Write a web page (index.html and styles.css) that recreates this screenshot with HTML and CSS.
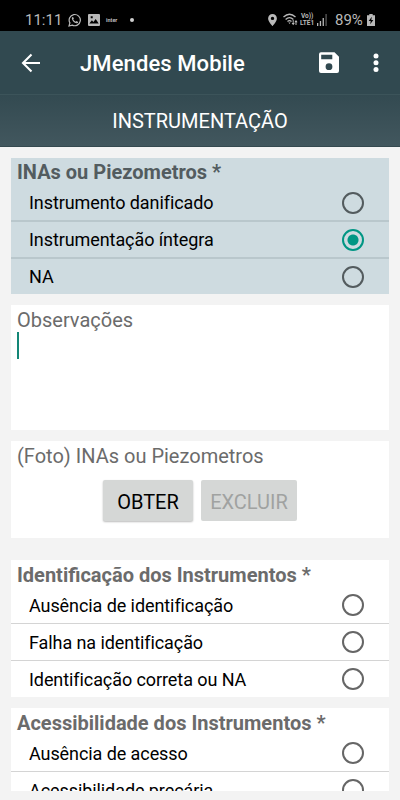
FILE: index.html
```html
<!DOCTYPE html>
<html lang="pt-BR">
<head>
<meta charset="utf-8">
<title>JMendes Mobile</title>
<link rel="stylesheet" href="styles.css">
</head>
<body>
<div class="status">
  <span class="clock">11:11</span>
  <svg class="whats" width="14" height="14" viewBox="0 0 14 14"><path d="M1.9 9.9A5.6 5.6 0 1 1 4.2 12.1L1 13z" fill="none" stroke="currentColor" stroke-width="1.2"/><path d="M4.9 3.7 5.9 5.6 5.2 6.5Q6.1 8.1 7.7 8.8L8.5 8 10.3 9Q10.1 10.4 8.6 10.3 4.8 9.7 3.8 5.6 3.8 4.1 4.9 3.7z" fill="currentColor"/></svg>
  <svg class="photo" width="12" height="12" viewBox="0 0 12 12"><path fill="currentColor" fill-rule="evenodd" d="M1 0H11Q12 0 12 1V11Q12 12 11 12H1Q0 12 0 11V1Q0 0 1 0zM1.3 9.5H10.7L7.7 5 5.4 8 3.9 6.3zM2.7 2.3V4.3H4.7V2.3z"/></svg>
  <span class="inter">inter</span>
  <span class="dot"></span>
  <span class="spacer"></span>
  <svg class="pin" width="9" height="12" viewBox="0 0 9 12"><path fill="currentColor" fill-rule="evenodd" d="M4.5 0A4.4 4.4 0 0 0 .1 4.4C.1 7.5 4.5 12 4.5 12S8.9 7.5 8.9 4.4A4.4 4.4 0 0 0 4.5 0zM4.5 2.7A1.7 1.7 0 1 1 4.5 6.1 1.7 1.7 0 0 1 4.5 2.7z"/></svg>
  <svg class="wifi" width="15" height="13" viewBox="0 0 15 13"><g fill="none" stroke="currentColor" stroke-width="1.3"><path d="M.5 4Q6.5-1.4 12.5 4M2.6 6.4Q6.5 2.9 10.4 6.4M4.5 8.5Q6.5 6.8 8.5 8.5"/><path d="M10.2 7V11M13 8V12" stroke-width="1"/></g><path fill="currentColor" d="M5.4 9.4H7.6L6.5 11zM8.6 10H11.8L10.2 12.3zM11.4 9.2H14.6L13 7z"/></svg>
  <span class="lte"><span class="vo">Vo))</span><span>LTE1</span></span>
  <svg class="signal" width="10" height="12" viewBox="0 0 10 12"><path fill="currentColor" d="M0 9H1.3V12H0zM2.8 7H4.1V12H2.8zM5.6 4H6.9V12H5.6z"/><path fill="#555" d="M8.4 0H9.8V12H8.4z"/></svg>
  <span class="percent">89%</span>
  <svg class="battery" width="8" height="12" viewBox="0 0 8 12"><path fill="currentColor" fill-rule="evenodd" d="M2.3 0H5.7V1.3H8V12H0V1.3H2.3zM4.8 2.8 1.7 7H3.7L3.2 10.3 6.3 6H4.3z"/></svg>
</div>
<header class="appbar">
  <svg class="back" width="24" height="24" viewBox="0 0 24 24"><path d="M21 12H4M12.5 3.5 4 12 12.5 20.5" fill="none" stroke="#fff" stroke-width="2.1"/></svg>
  <h1>JMendes Mobile</h1>
  <svg class="save" width="20" height="21" viewBox="0 0 20 21"><path fill="#fff" fill-rule="evenodd" d="M2 .3H15.5L20 4.8V19Q20 21 18 21H2Q0 21 0 19V2.3Q0 .3 2 .3zM2.2 2.8V7.2H13.3V2.8zM10 11.3A3.4 3.4 0 1 0 10 18.1 3.4 3.4 0 1 0 10 11.3z"/></svg>
  <svg class="more" width="6" height="20" viewBox="0 0 6 20"><g fill="#fff"><circle cx="3" cy="3" r="2.5"/><circle cx="3" cy="9.8" r="2.5"/><circle cx="3" cy="16.6" r="2.5"/></g></svg>
</header>
<div class="section">INSTRUMENTAÇÃO</div>
<main>
  <section class="card active">
    <h2>INAs ou Piezometros *</h2>
    <label class="row"><span>Instrumento danificado</span><i class="radio"></i></label>
    <label class="row"><span>Instrumentação íntegra</span><i class="radio on"></i></label>
    <label class="row"><span>NA</span><i class="radio"></i></label>
  </section>
  <section class="card notes">
    <h3>Observações</h3>
    <div class="caret"></div>
  </section>
  <section class="card picture">
    <h3>(Foto) INAs ou Piezometros</h3>
    <div class="buttons"><button class="get">OBTER</button><button class="del" disabled>EXCLUIR</button></div>
  </section>
  <section class="card">
    <h2>Identificação dos Instrumentos *</h2>
    <label class="row"><span>Ausência de identificação</span><i class="radio"></i></label>
    <label class="row"><span>Falha na identificação</span><i class="radio"></i></label>
    <label class="row"><span>Identificação correta ou NA</span><i class="radio"></i></label>
  </section>
  <section class="card">
    <h2>Acessibilidade dos Instrumentos *</h2>
    <label class="row"><span>Ausência de acesso</span><i class="radio"></i></label>
    <label class="row"><span>Acessibilidade precária</span><i class="radio"></i></label>
  </section>
</main>
</body>
</html>
```
FILE: styles.css
```css
* { box-sizing: border-box; }
body {
  margin: 0;
  width: 400px;
  height: 800px;
  overflow: hidden;
  background: #f3f3f3;
  font-family: Roboto, sans-serif;
  color: #000;
}
h1, h2, h3 { margin: 0; }
.status {
  display: flex;
  align-items: center;
  height: 31px;
  padding: 8px 25px 0;
  background: #000;
  color: #b9b9b9;
}
.status svg { flex: none; }
.clock { width: 43px; font-size: 15px; }
.photo { margin-left: 6px; }
.inter { margin-left: 6px; width: 12px; font-size: 5.5px; font-weight: 700; }
.dot { width: 4px; height: 4px; margin-left: 12px; border-radius: 50%; background: #d0d0d0; }
.spacer { flex: 1; }
.wifi { margin-left: 6px; }
.lte { display: flex; flex-direction: column; width: 15px; margin-left: 2px; font-size: 6.5px; line-height: 7px; font-weight: 700; }
.vo { padding-left: 1px; }
.signal { margin-left: 2px; }
.percent { margin-left: 8px; width: 28px; font-size: 15px; }
.battery { margin-left: 4px; }
.appbar {
  display: flex;
  align-items: center;
  height: 63px;
  padding: 0 21px 0 19px;
  background: #314950;
  color: #fff;
}
.appbar h1 { flex: 1; margin-left: 37px; font-size: 22px; font-weight: 500; line-height: 30px; padding-top: 2px; letter-spacing: .1px; }
.more { margin-left: 34px; }
.section {
  height: 53px;
  border-top: 1px solid #3c545a;
  border-bottom: 1px solid #35494f;
  background: linear-gradient(#334a51, #42575e);
  color: #fff;
  font-size: 20px;
  line-height: 53px;
  text-align: center;
}
main {
  display: flex;
  flex-direction: column;
  gap: 11px;
  height: 644px;
  padding: 11px 11px 0;
  overflow: hidden;
}
.card { flex: none; background: #fff; }
.card.active { background: #cedbe0; }
h2, h3 { padding-left: 6px; height: 27px; font-size: 20px; line-height: 30px; color: #6b6b6b; white-space: nowrap; }
h3 { font-weight: 400; }
.active h2 { line-height: 29px; color: #535c5f; }
.row {
  display: flex;
  align-items: center;
  justify-content: space-between;
  height: 37px;
  padding: 0 25px 0 18px;
  border-bottom: 1px solid #d4d4d4;
  font-size: 18px;
  letter-spacing: -.08px;
}
.active .row { border-bottom: 2px solid #b9c7cc; }
.row:last-child { height: 36px; border-bottom: 0; }
.active .row:last-child { height: 35px; border-bottom: 0; }
.row span { font-variant-ligatures: common-ligatures; }
.radio { width: 22px; height: 22px; border: 2px solid #666; border-radius: 50%; }
.active .radio { border-color: #535b5e; }
.active .radio.on { border-color: #009684; background: radial-gradient(circle, #009684 5px, transparent 6px); }
.notes { height: 125px; }
.caret { width: 2px; height: 27px; margin-left: 6px; background: #138676; }
.picture { height: 97px; margin-bottom: 11px; }
.buttons { display: flex; gap: 8px; margin: 12px 0 0 92px; }
button { height: 41px; padding: 2px 0 0; border: 0; border-radius: 2px; background: #d5d7d6; font: 20px Roboto, sans-serif; color: #000; }
.get { width: 90px; box-shadow: 0 1px 2px #0004; }
.del { width: 96px; color: #a0a2a1; }
```
